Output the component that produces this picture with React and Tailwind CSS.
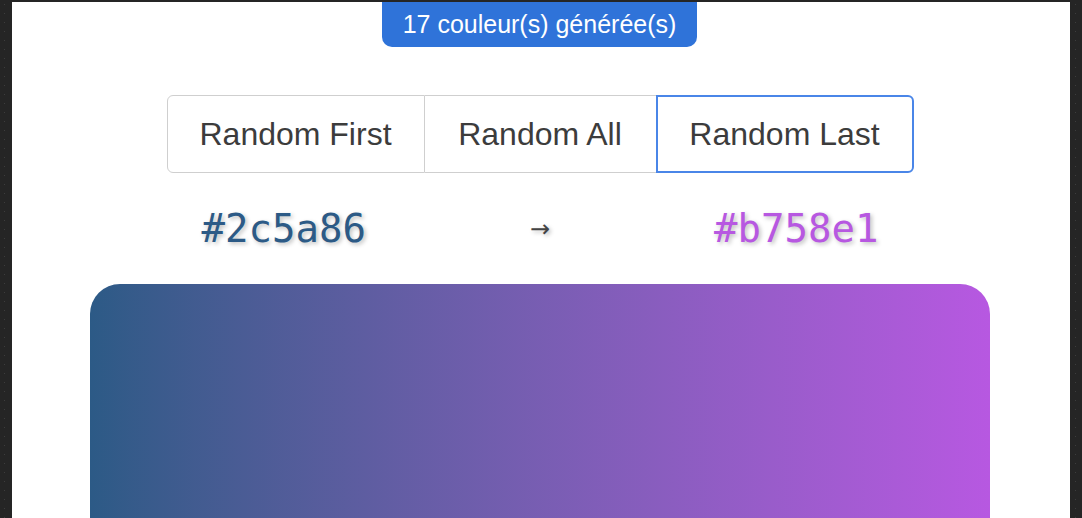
export default function App() {
  return (
    <div className="w-[1082px] h-[518px] overflow-hidden bg-[#252525] bg-[radial-gradient(#3d3d3d_0.8px,transparent_0.9px)] bg-[length:9px_9px] pt-[2px] px-[12px]">
      <div className="bg-white h-[600px] flex flex-col items-center font-['Liberation_Sans',Arial,sans-serif]">
        <div className="h-[45px] px-[21px] mr-[3px] flex items-center bg-[#2f73d9] text-white text-[25px] rounded-b-[10px] leading-none whitespace-nowrap">
          17 couleur(s) générée(s)
        </div>
        <div className="mt-[48px] mr-[2px] flex h-[78px] text-[32px] text-[#3c3c3c] whitespace-nowrap">
          <button className="w-[258px] border border-[#cfcfcf] rounded-l-[6px] bg-white">Random First</button>
          <button className="w-[231px] border-y border-[#cfcfcf] bg-white">Random All</button>
          <button className="w-[258px] border-2 border-[#4a86e8] rounded-r-[6px] bg-white">Random Last</button>
        </div>
        <div className="mt-[28px] mr-[2px] h-[56px] flex items-center justify-center gap-[164px]">
          <span className="font-['DejaVu_Sans_Mono',monospace] text-[39px] text-[#2c5a86] [text-shadow:2px_2px_4px_rgba(0,0,0,0.25)]">#2c5a86</span>
          <span className="font-['DejaVu_Sans',sans-serif] text-[24px] text-[#444] [text-shadow:2px_2px_4px_rgba(0,0,0,0.25)]">→</span>
          <span className="font-['DejaVu_Sans_Mono',monospace] text-[39px] text-[#b758e1] [text-shadow:2px_2px_4px_rgba(0,0,0,0.25)]">#b758e1</span>
        </div>
        <div className="mt-[27px] mr-[2px] w-[900px] h-[300px] shrink-0 rounded-[30px] bg-gradient-to-r from-[#2c5a86] to-[#b758e1]"></div>
      </div>
    </div>
  );
}
